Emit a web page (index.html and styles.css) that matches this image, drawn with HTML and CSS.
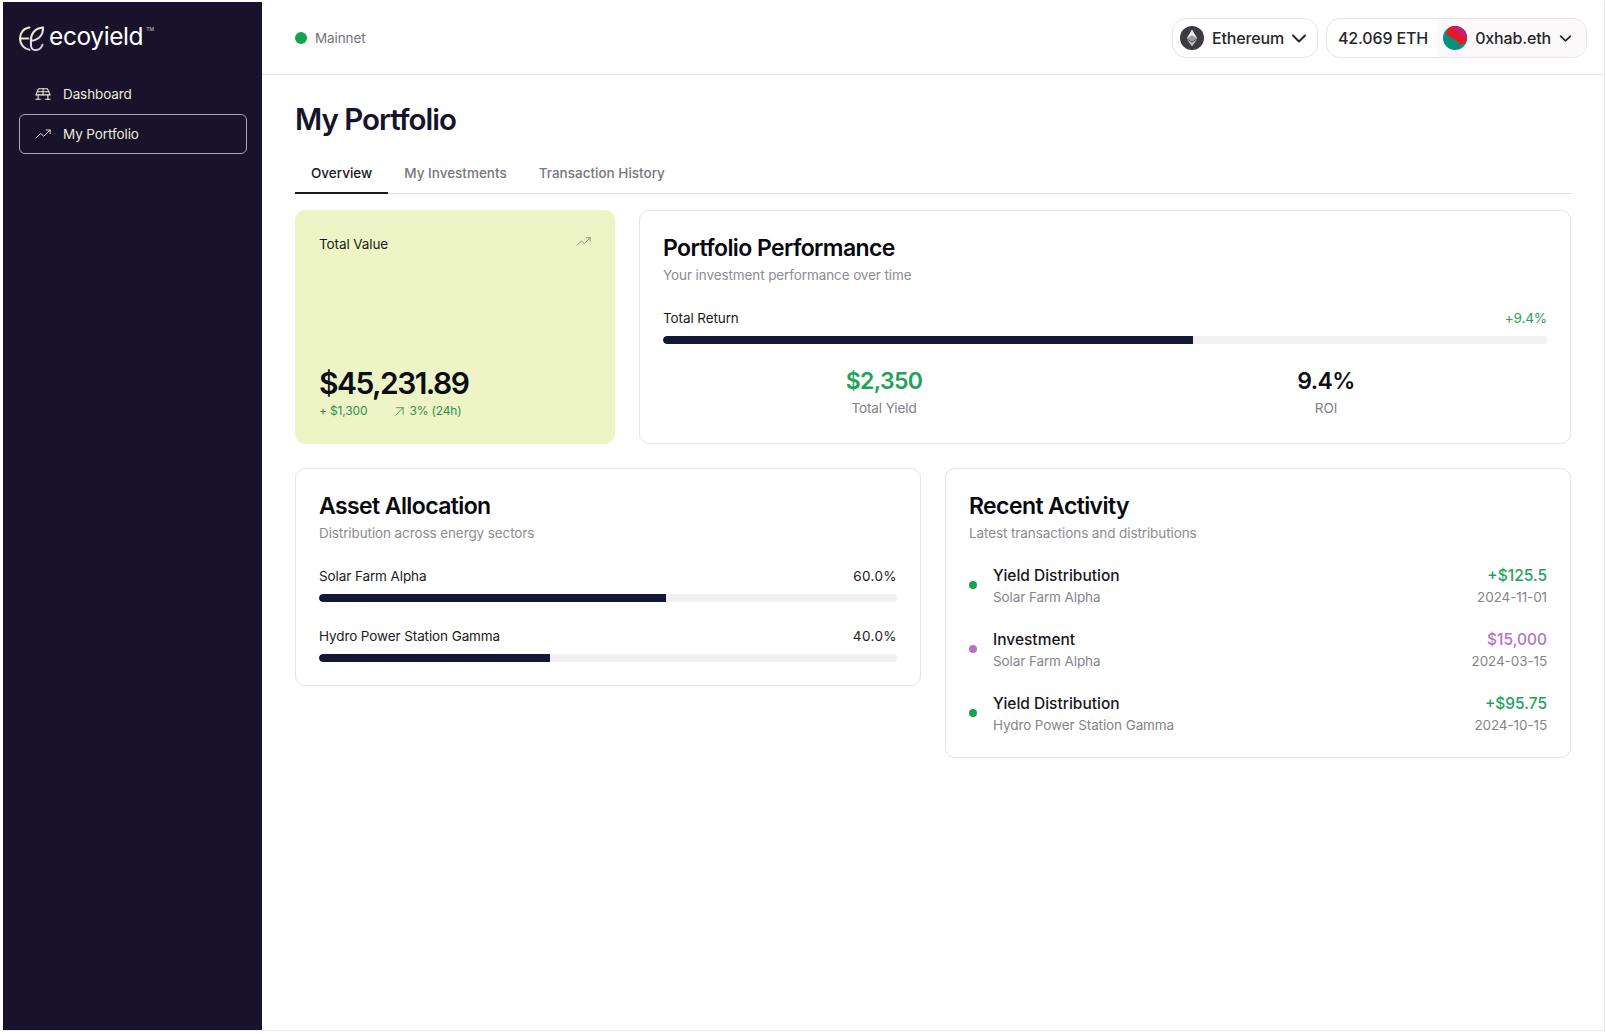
FILE: index.html
```html
<!DOCTYPE html>
<html lang="en">
<head>
<meta charset="utf-8">
<title>ecoyield - My Portfolio</title>
<link rel="stylesheet" href="styles.css">
</head>
<body>
<div class="app">
  <aside class="sidebar">
    <div class="brand">
      <svg class="brand-mark" viewBox="0 0 24 24" fill="none" stroke="url(#lg)" stroke-width="2" stroke-linecap="round">
        <defs><linearGradient id="lg" gradientUnits="userSpaceOnUse" x1="1" y1="2" x2="23" y2="23"><stop offset="0" stop-color="#eef5b8"/><stop offset="0.5" stop-color="#e4e6d8"/><stop offset="1" stop-color="#c3bede"/></linearGradient></defs>
        <path d="M10 1.500C4.500 2 1 6.500 1 12S4.500 22 10 22.800"/>
        <path d="M1.200 12H9"/>
        <path d="M11.500 14.500C11 7.500 15.500 2 23 1.500C23.500 8.500 19 13.500 11.800 14.200"/>
        <path d="M11.500 14.500V19C11.500 22 14 23.500 17 23C20 22.500 21.800 20.500 22.500 18"/>
      </svg>
      <span class="brand-name">ecoyield</span><span class="brand-tm">TM</span>
    </div>
    <nav class="nav">
      <a class="nav-item">
        <svg class="nav-icon" viewBox="0 0 18 16" fill="none" stroke="currentColor" stroke-width="1.200" stroke-linejoin="round" stroke-linecap="round">
          <path d="M4 2h10l3 7H1z"/><path d="M9 2v7"/><path d="M2.500 5.500h13"/><path d="M3.500 9v5"/><path d="M14.500 9v5"/><path d="M1 14h5"/><path d="M12 14h5"/>
        </svg>
        <span>Dashboard</span>
      </a>
      <a class="nav-item nav-item-active">
        <svg class="nav-icon" viewBox="0 0 18 12" fill="none" stroke="currentColor" stroke-width="1.100" stroke-linejoin="round" stroke-linecap="round">
          <path d="M1 10.500 6.500 5.500l3.500 3 7-7"/><path d="M12.500 1.500H17V5.500"/>
        </svg>
        <span>My Portfolio</span>
      </a>
    </nav>
  </aside>
  <div class="main">
    <header class="topbar">
      <div class="network"><span class="network-dot"></span><span>Mainnet</span></div>
      <div class="top-actions">
        <div class="pill pill-chain">
          <svg class="coin" viewBox="0 0 24 24">
            <circle cx="12" cy="12" r="12" fill="#3a3a40"/>
            <path d="M12 3.500 6.800 12.200 12 15.300l5.200-3.100z" fill="#e8e8ea"/>
            <path d="M12 16.400 6.800 13.300 12 20.500l5.200-7.200z" fill="#bdbdc2"/>
            <path d="M12 9.500 6.800 12.200 12 15.300l5.200-3.100z" fill="#9c9ca3"/>
          </svg>
          <span>Ethereum</span>
          <svg class="chev chev-large" viewBox="0 0 16 10" fill="none" stroke="currentColor" stroke-width="2" stroke-linecap="round" stroke-linejoin="round"><path d="M2 2l6 6 6-6"/></svg>
        </div>
        <div class="pill pill-wallet">
          <span class="balance">42.069 ETH</span>
          <div class="account">
            <svg class="coin" viewBox="0 0 24 24">
              <defs><clipPath id="av"><circle cx="12" cy="12" r="12"/></clipPath></defs>
              <g clip-path="url(#av)">
                <rect width="24" height="24" fill="#0a8f7f"/>
                <path d="M6 0H24V18L20 17 17 19 13 14 9 12 3 8z" fill="#e8191f"/>
                <path d="M9 0H24V14L20 12 15 6 11 5z" fill="#cc1b78"/>
              </g>
            </svg>
            <span>0xhab.eth</span>
            <svg class="chev" viewBox="0 0 16 10" fill="none" stroke="currentColor" stroke-width="2" stroke-linecap="round" stroke-linejoin="round"><path d="M2 2l6 6 6-6"/></svg>
          </div>
        </div>
      </div>
    </header>
    <main class="content">
      <h1 class="page-title">My Portfolio</h1>
      <div class="tabs">
        <span class="tab tab-active">Overview</span>
        <span class="tab">My Investments</span>
        <span class="tab">Transaction History</span>
      </div>
      <section class="row-top">
        <div class="value-card">
          <div class="value-head">
            <span>Total Value</span>
            <svg class="value-icon" viewBox="0 0 18 12" fill="none" stroke="currentColor" stroke-width="1.100" stroke-linejoin="round" stroke-linecap="round">
              <path d="M1 10.500 6.500 5.500l3.500 3 7-7"/><path d="M12.500 1.500H17V5.500"/>
            </svg>
          </div>
          <div class="value-amount">$45,231.89</div>
          <div class="value-change">
            <span>+ $1,300</span>
            <span class="value-pct">
              <svg class="arrow" viewBox="0 0 12 12" fill="none" stroke="currentColor" stroke-width="1" stroke-linecap="round" stroke-linejoin="round"><path d="M2 11 11 2"/><path d="M3 2h8v8"/></svg>
              3% (24h)
            </span>
          </div>
        </div>
        <div class="card">
          <h2 class="card-title">Portfolio Performance</h2>
          <p class="card-sub">Your investment performance over time</p>
          <div class="meter meter-perf">
            <div class="meter-head"><span>Total Return</span><span class="green">+9.4%</span></div>
            <div class="track"><div class="fill" style="width:60%"></div></div>
          </div>
          <div class="stats">
            <div class="stat"><div class="stat-value green">$2,350</div><div class="stat-label">Total Yield</div></div>
            <div class="stat"><div class="stat-value">9.4%</div><div class="stat-label">ROI</div></div>
          </div>
        </div>
      </section>
      <section class="row-bottom">
        <div class="card">
          <h2 class="card-title">Asset Allocation</h2>
          <p class="card-sub">Distribution across energy sectors</p>
          <div class="meter meter-alloc">
            <div class="meter-head"><span>Solar Farm Alpha</span><span class="meter-pct">60.0%</span></div>
            <div class="track"><div class="fill" style="width:60%"></div></div>
          </div>
          <div class="meter meter-alloc">
            <div class="meter-head"><span>Hydro Power Station Gamma</span><span class="meter-pct">40.0%</span></div>
            <div class="track"><div class="fill" style="width:40%"></div></div>
          </div>
        </div>
        <div class="card">
          <h2 class="card-title">Recent Activity</h2>
          <p class="card-sub">Latest transactions and distributions</p>
          <ul class="activity">
            <li class="activity-row">
              <span class="dot dot-green"></span>
              <div class="activity-main"><div class="activity-title">Yield Distribution</div><div class="activity-sub">Solar Farm Alpha</div></div>
              <div class="activity-side"><div class="activity-amount green">+$125.5</div><div class="activity-sub">2024-11-01</div></div>
            </li>
            <li class="activity-row">
              <span class="dot dot-purple"></span>
              <div class="activity-main"><div class="activity-title">Investment</div><div class="activity-sub">Solar Farm Alpha</div></div>
              <div class="activity-side"><div class="activity-amount purple">$15,000</div><div class="activity-sub">2024-03-15</div></div>
            </li>
            <li class="activity-row">
              <span class="dot dot-green"></span>
              <div class="activity-main"><div class="activity-title">Yield Distribution</div><div class="activity-sub">Hydro Power Station Gamma</div></div>
              <div class="activity-side"><div class="activity-amount green">+$95.75</div><div class="activity-sub">2024-10-15</div></div>
            </li>
          </ul>
        </div>
      </section>
    </main>
  </div>
</div>
</body>
</html>
```

FILE: styles.css
```css
* { box-sizing: border-box; }
html, body { margin: 0; height: 100%; }
body {
  background: #fff;
  color: #0f0f17;
  font-family: Inter, "Liberation Sans", sans-serif;
  font-size: 13.5px;
  letter-spacing: -0.1px;
  overflow: hidden;
  padding: 2px 1px 3px 3px;
}
.app {
  display: flex;
  height: 1029px;
  border-right: 1px solid #ececef;
  border-bottom: 1px solid #ececef;
}
.sidebar {
  width: 259px;
  flex: none;
  background: #18132b;
  color: #ecebdd;
  padding: 0 15px 0 16px;
}
.brand {
  display: flex;
  align-items: flex-start;
  height: 72px;
  padding-top: 20px;
}
.brand-mark { width: 25px; height: 25px; margin-top: 4px; margin-right: 5px; }
.brand-name { font-size: 24.5px; line-height: 28px; font-weight: 400; letter-spacing: -0.4px; color: #fff; }
.brand-tm { font-size: 5px; line-height: 8px; margin-left: 3px; margin-top: 3px; color: #cfcfd6; letter-spacing: 0; }
.nav { display: flex; flex-direction: column; }
.nav-item {
  display: flex;
  align-items: center;
  gap: 12px;
  height: 40px;
  padding: 0 15px;
  border: 1px solid transparent;
  border-radius: 6px;
}
.nav-item-active { border-color: #a9a8ae; }
.nav-icon { width: 16px; height: 16px; flex: none; }
.main { flex: 1; min-width: 0; display: flex; flex-direction: column; }
.topbar {
  height: 73px;
  flex: none;
  display: flex;
  justify-content: space-between;
  align-items: center;
  padding: 0 17px 0 33px;
  border-bottom: 1px solid #e3e3e6;
}
.network { display: flex; align-items: center; gap: 8px; color: #73737a; }
.network-dot { width: 12px; height: 12px; border-radius: 50%; background: #16a34a; }
.top-actions { display: flex; gap: 8px; font-size: 16px; font-weight: 500; color: #26262c; letter-spacing: -0.15px; }
.pill {
  display: flex;
  align-items: center;
  height: 40px;
  border: 1px solid #e4e4ea;
  border-radius: 14px;
}
.pill-chain { width: 146px; padding: 0 7px; gap: 8px; }
.pill-wallet { width: 261px; padding: 0 0 0 11px; justify-content: space-between; overflow: hidden; }
.coin { width: 24px; height: 24px; flex: none; }
.chev { width: 13px; height: 9px; flex: none; }
.chev-large { width: 16px; height: 11px; margin-left: -1px; }
.account {
  display: flex;
  align-items: center;
  gap: 8px;
  height: 100%;
  padding: 0 14px 0 6px;
  background: #fcf9fb;
}
.content { padding: 24px 33px 0; }
.page-title {
  margin: 0 0 21px;
  font-size: 29.500px;
  line-height: 40px;
  font-weight: 600;
  letter-spacing: -1px;
  color: #15142a;
}
.tabs { display: flex; height: 34px; border-bottom: 1px solid #dfdfe2; margin-bottom: 16px; }
.tab {
  padding: 0 16px;
  height: 34px;
  line-height: 27px;
  font-weight: 500;
  color: #77777d;
  letter-spacing: 0;
}
.tab-active { color: #17172a; border-bottom: 2px solid #17172a; }
.row-top { display: grid; grid-template-columns: 320px 1fr; gap: 24px; height: 234px; margin-bottom: 24px; }
.row-bottom { display: grid; grid-template-columns: 1fr 1fr; gap: 24px; align-items: start; }
.value-card {
  background: #edf5c7;
  border-radius: 10px;
  padding: 24px;
  display: flex;
  flex-direction: column;
}
.value-head { display: flex; justify-content: space-between; align-items: flex-start; line-height: 20px; color: #1b1b20; }
.value-icon { width: 15px; height: 11px; color: #7d8a76; margin: 2px 0 0; }
.value-amount {
  margin-top: auto;
  font-size: 30px;
  line-height: 38px;
  font-weight: 600;
  letter-spacing: -1.55px;
  color: #0d0d18;
}
.value-change { display: flex; gap: 27px; font-size: 12px; line-height: 18px; color: #2f8f4a; letter-spacing: -0.15px; }
.value-pct { display: flex; align-items: center; gap: 5px; }
.arrow { width: 10px; height: 10px; }
.card {
  border: 1px solid #e4e4e6;
  border-radius: 10px;
  padding: 23px;
  background: #fff;
}
.card-title { margin: 0; font-size: 23px; line-height: 28px; font-weight: 600; letter-spacing: -0.6px; color: #08080f; }
.card-sub { margin: 3px 0 0; line-height: 20px; color: #8c8c93; }
.meter-head { display: flex; justify-content: space-between; line-height: 20px; color: #1a1a20; margin-bottom: 8px; }
.meter-pct { letter-spacing: 0.4px; }
.green { color: #1fa35a; }
.purple { color: #b86fc5; }
.track { height: 8px; border-radius: 4px; background: #f1eff0; overflow: hidden; }
.fill { height: 100%; background: #141735; border-radius: 4px 0 0 4px; }
.meter-perf { margin-top: 23px; }
.meter-alloc { margin-top: 23px; }
.meter-alloc + .meter-alloc { margin-top: 24px; }
.stats { display: grid; grid-template-columns: 1fr 1fr; margin-top: 21px; text-align: center; }
.stat-value { font-size: 23px; line-height: 32px; font-weight: 600; letter-spacing: -0.6px; }
.stat-label { line-height: 20px; color: #808087; margin-top: 1px; }
.activity { list-style: none; margin: 18px 0 -3px; padding: 0; display: flex; flex-direction: column; gap: 16px; }
.activity-row { display: flex; align-items: center; height: 48px; }
.dot { width: 8px; height: 8px; border-radius: 50%; flex: none; margin-right: 16px; }
.dot-green { background: #16a34a; }
.dot-purple { background: #b86fc5; }
.activity-main { flex: 1; }
.activity-side { text-align: right; }
.activity-title { font-size: 15.5px; line-height: 24px; font-weight: 500; color: #17171d; letter-spacing: 0; }
.activity-amount { font-size: 15.5px; line-height: 24px; font-weight: 500; letter-spacing: 0; }
.activity-sub { line-height: 20px; color: #85858b; margin-top: -1px; }
```
